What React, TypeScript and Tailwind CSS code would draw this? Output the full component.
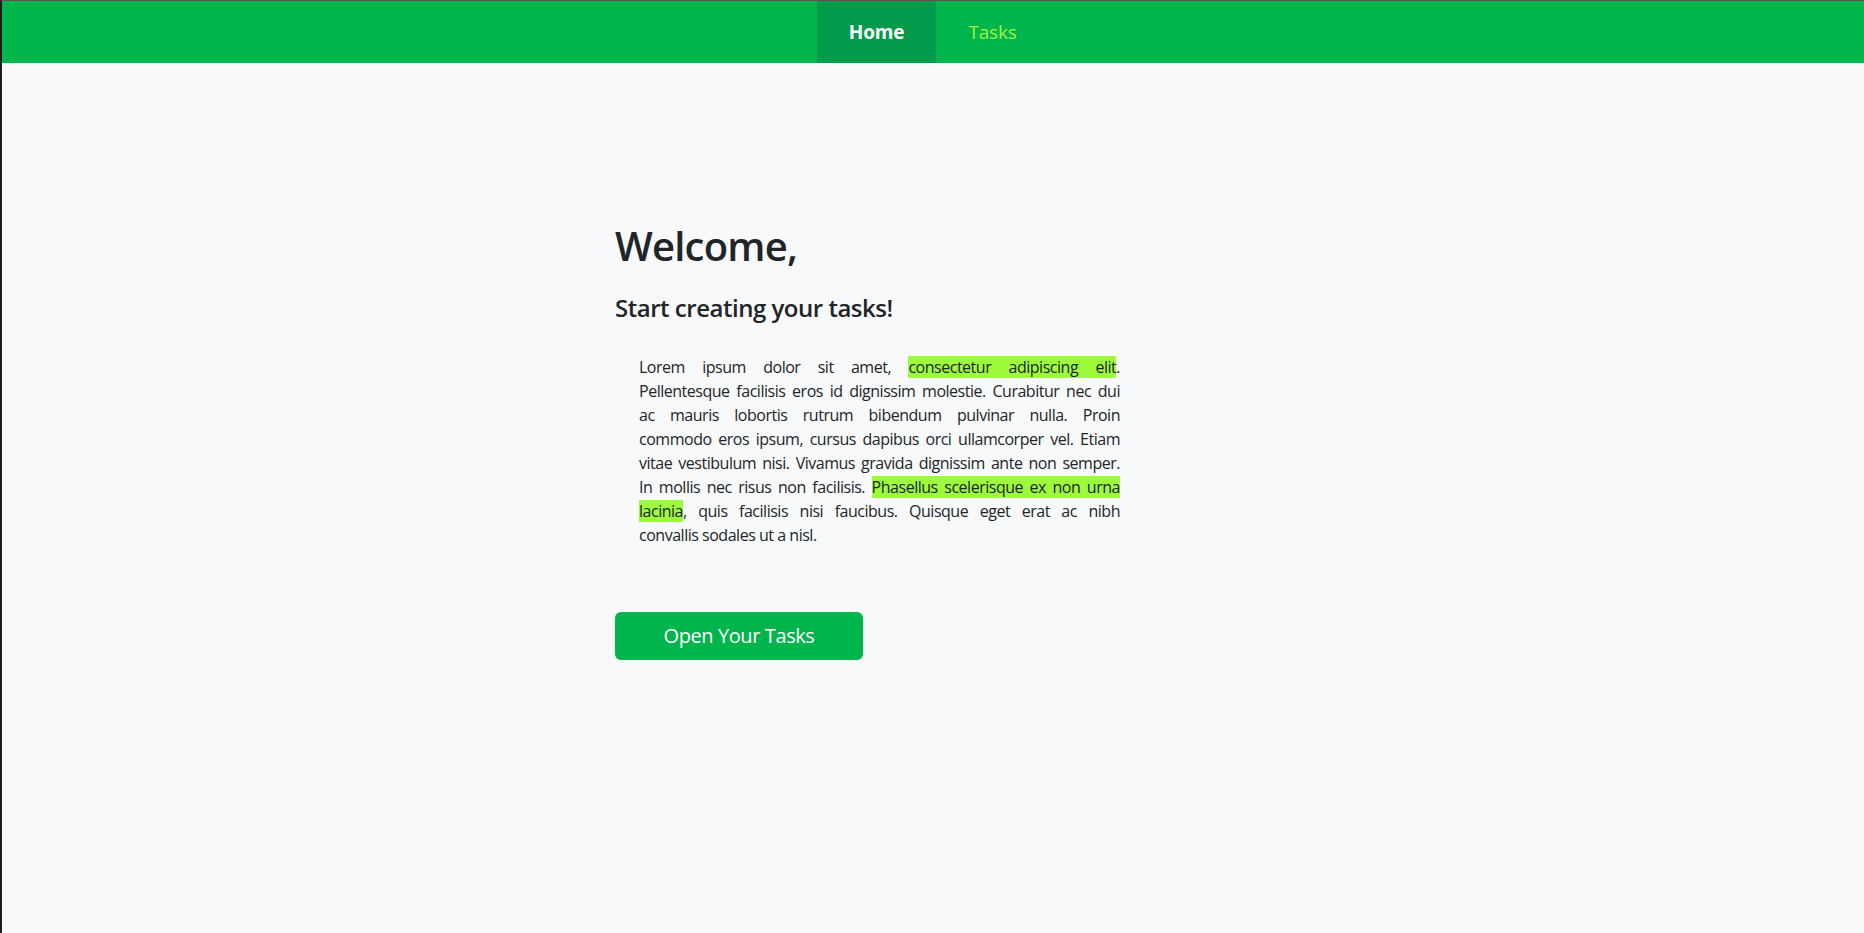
import React from "react";

const lines: React.ReactNode[] = [
  <>Lorem ipsum dolor sit amet, <mark className="bg-[#9dfb3b] text-[#212529]">consectetur adipiscing elit</mark>.</>,
  <>Pellentesque facilisis eros id dignissim molestie. Curabitur nec dui</>,
  <>ac mauris lobortis rutrum bibendum pulvinar nulla. Proin</>,
  <>commodo eros ipsum, cursus dapibus orci ullamcorper vel. Etiam</>,
  <>vitae vestibulum nisi. Vivamus gravida dignissim ante non semper.</>,
  <>In mollis nec risus non facilisis. <mark className="bg-[#9dfb3b] text-[#212529]">Phasellus scelerisque ex non urna</mark></>,
  <><mark className="bg-[#9dfb3b] text-[#212529]">lacinia</mark>, quis facilisis nisi faucibus. Quisque eget erat ac nibh</>,
];

export default function App() {
  return (
    <div className="min-h-screen bg-[#f8f9fa] border-l-2 border-t border-l-[#1f1a1f] border-t-[#555555] text-[#212529] [font-family:'Open_Sans',sans-serif]">
      <nav className="h-[62px] bg-[#00b54c] flex justify-center">
        <a className="h-full w-[119px] flex items-center justify-center bg-[#019b4b] text-white font-bold text-[19px] tracking-[-0.01em]">Home</a>
        <a className="h-full w-[113px] flex items-center justify-center text-[#a3f23b] text-[19px] tracking-[-0.01em]">Tasks</a>
      </nav>
      <main className="flex justify-center pt-[159px]">
        <div className="w-[636px]">
          <h1 className="text-[40px] leading-[48px] font-semibold mb-[23px] tracking-[-0.02em]">Welcome,</h1>
          <h4 className="text-[24px] leading-[29px] font-semibold mb-[33px] tracking-[-0.02em]">Start creating your tasks!</h4>
          <div className="w-[529px] px-6 text-[16px] leading-6 tracking-[-0.03em]">
            {lines.map((l, i) => (
              <div key={i} className="text-justify [text-align-last:justify] whitespace-nowrap">{l}</div>
            ))}
            <div>convallis sodales ut a nisl.</div>
          </div>
          <button className="mt-[65px] w-[248px] h-[48px] rounded-[6px] bg-[#00b54c] text-white text-[20px] tracking-[-0.02em]">Open Your Tasks</button>
        </div>
      </main>
    </div>
  );
}
